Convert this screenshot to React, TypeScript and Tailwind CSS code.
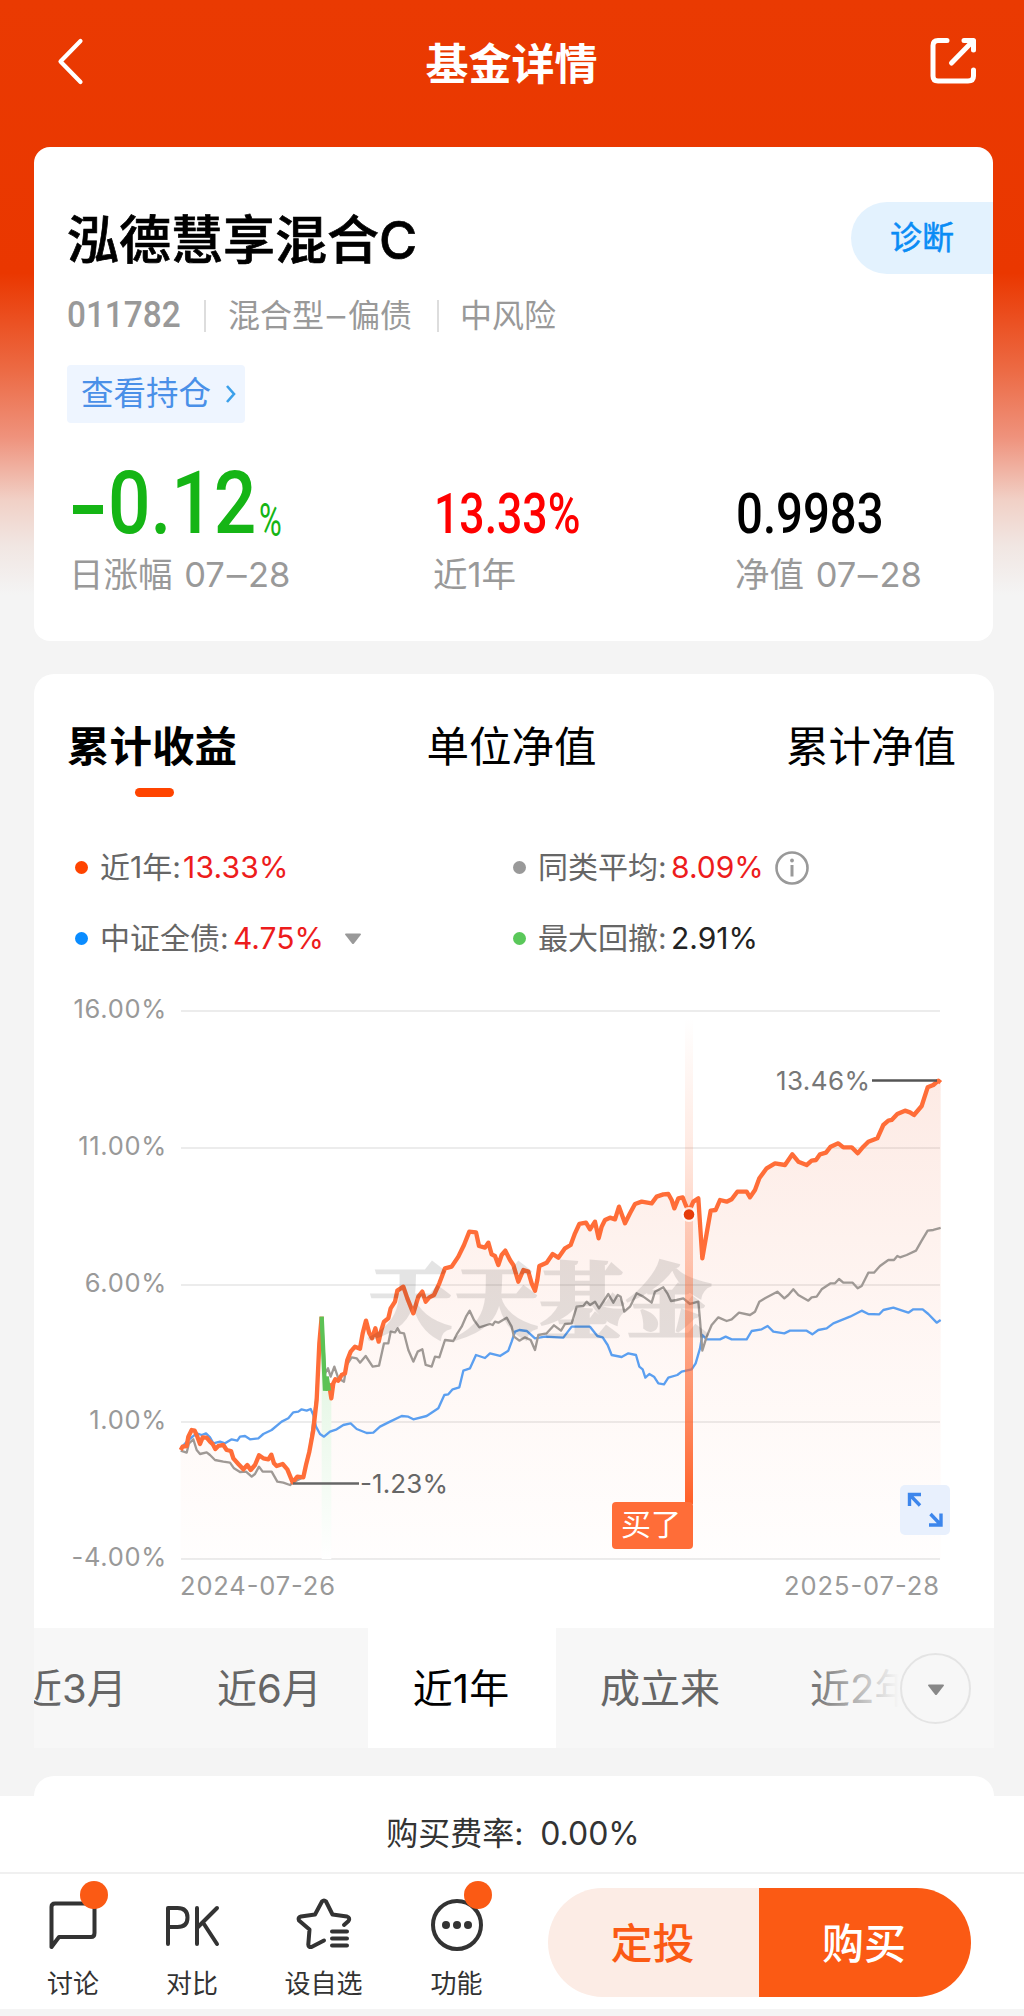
import React from "react";

const FONT = "font-['Inter','Noto_Sans_CJK_SC',sans-serif]";

const toPath = (pts: string) => "M" + pts.trim().split(/\s+/).join("L");

const FUND_A =
  "62,1350 68,1340 80,1338 85,1310 95,1290 104,1292 112,1310 120,1332 128,1312 140,1313 150,1325 158,1332 166,1347 175,1338 190,1335 200,1350 213,1353 220,1375 235,1392 250,1408 262,1395 272,1410 285,1395 297,1366 310,1375 325,1378 334,1364 342,1390 350,1398 368,1392 382,1408 398,1447 412,1430 430,1432 438,1395 448,1355 460,1290 470,1200 478,1030 485,950";
const DRAWDOWN = "485,950 490,1060 495,1172 500,1130 507,1172";
const FUND_B =
  "507,1150 514,1195 520,1150 526,1138 535,1142 545,1125 555,1120 562,1080 572,1055 585,1040 600,1046 608,1000 618,962 628,1000 636,1015 646,985 656,1025 664,990 672,965 685,955 692,925 705,905 712,872 730,860 742,895 760,940 775,890 787,875 797,905 808,892 822,885 838,850 855,805 875,800 895,770 912,735 928,695 948,697 957,738 975,743 985,728 995,763 1005,768 1015,795 1025,765 1036,752 1050,780 1060,795 1075,845 1090,810 1105,815 1115,850 1125,872 1132,840 1138,798 1160,788 1178,762 1195,773 1215,745 1232,735 1245,700 1258,672 1278,668 1290,688 1305,665 1316,715 1325,680 1335,660 1350,653 1365,658 1377,620 1395,670 1410,640 1425,612 1445,605 1475,610 1490,590 1510,583 1525,582 1535,600 1543,625 1555,595 1568,592 1577,615 1587,635 1600,605 1615,595 1627,775 1640,700 1652,632 1667,630 1680,600 1700,605 1715,598 1732,575 1760,575 1770,592 1785,570 1798,535 1820,505 1845,490 1875,495 1897,463 1915,485 1940,495 1955,482 1968,480 1980,463 1998,458 2012,440 2035,430 2050,442 2075,442 2093,460 2110,440 2125,425 2152,415 2170,375 2185,362 2195,360 2212,342 2235,332 2250,337 2262,345 2285,318 2303,262 2320,255 2335,242 2342,248";
const PEERS =
  "62,1352 80,1358 87,1330 100,1318 110,1350 120,1362 140,1357 150,1365 165,1380 190,1385 210,1388 222,1405 240,1416 258,1415 275,1430 285,1422 297,1400 308,1415 335,1415 352,1445 370,1448 390,1455 400,1447 430,1432 438,1390 450,1340 468,1200 480,1030 487,970 495,1120 504,1105 512,1130 523,1100 535,1135 552,1145 560,1095 575,1072 590,1075 600,1088 617,1068 638,1100 657,1097 672,1030 685,1030 692,995 705,997 713,985 720,998 732,1000 745,1050 760,1085 773,1055 787,1048 797,1095 815,1100 825,1070 838,1072 855,1020 880,1023 892,1000 905,980 918,950 929,932 942,960 958,982 990,972 998,975 1005,965 1015,968 1040,953 1055,980 1062,1010 1078,1022 1095,1012 1112,1020 1125,1050 1135,1005 1160,1000 1182,976 1203,992 1215,972 1235,970 1250,920 1270,918 1280,905 1290,915 1305,905 1317,925 1330,905 1345,882 1360,908 1373,885 1382,890 1393,935 1410,920 1430,880 1450,890 1475,908 1485,875 1510,862 1522,880 1533,903 1550,900 1570,895 1590,912 1615,905 1620,960 1627,1052 1640,1010 1655,975 1675,952 1700,963 1715,958 1737,938 1770,945 1785,935 1798,905 1815,895 1852,875 1873,895 1885,885 1900,868 1915,885 1945,902 1955,892 1970,890 1985,868 2012,850 2025,850 2037,837 2050,848 2078,848 2093,865 2105,858 2125,818 2142,818 2160,798 2185,780 2202,780 2212,768 2220,772 2240,765 2268,752 2285,722 2303,692 2320,690 2342,684";
const BOND =
  "62,1345 85,1320 110,1300 125,1305 138,1300 150,1312 160,1330 180,1325 195,1330 215,1318 232,1322 240,1310 255,1308 270,1318 295,1315 310,1302 335,1290 365,1265 385,1255 400,1237 415,1235 425,1228 440,1232 452,1227 460,1245 468,1280 480,1302 492,1310 510,1295 530,1288 550,1275 572,1270 590,1287 620,1299 640,1298 660,1280 690,1265 725,1248 745,1250 760,1258 800,1248 835,1225 853,1185 865,1183 878,1168 898,1162 910,1112 930,1105 948,1065 975,1074 990,1060 1020,1068 1045,1052 1055,1025 1065,995 1078,990 1100,993 1125,1015 1155,1010 1210,1013 1235,980 1290,980 1312,1008 1328,1012 1343,1035 1355,1065 1385,1071 1405,1060 1428,1065 1438,1100 1448,1108 1456,1133 1468,1122 1482,1130 1495,1150 1512,1153 1525,1133 1552,1125 1565,1115 1595,1108 1607,1090 1620,1045 1627,1005 1640,1018 1680,1018 1697,1010 1715,1018 1760,1018 1775,993 1805,988 1823,978 1840,995 1873,1000 1890,992 1940,992 1957,1003 1975,990 2000,985 2020,970 2070,950 2105,932 2125,942 2158,943 2170,930 2200,923 2245,938 2260,928 2288,928 2305,942 2330,968 2342,960";

const GRID = [
  { y: 1011, label: "16.00%" },
  { y: 1148, label: "11.00%" },
  { y: 1285, label: "6.00%" },
  { y: 1422, label: "1.00%" },
  { y: 1559, label: "-4.00%" },
];

function Chart() {
  return (
    <svg viewBox="34 980 960 648" width="960" height="648" className={`block ${FONT}`}>
      <defs>
        <linearGradient id="area" gradientUnits="userSpaceOnUse" x1="0" y1="240" x2="0" y2="1677">
          <stop offset="0" stopColor="#ee6a3f" stopOpacity="0.14" />
          <stop offset="0.6" stopColor="#fa7a4f" stopOpacity="0.055" />
          <stop offset="1" stopColor="#fa7a4f" stopOpacity="0.01" />
        </linearGradient>
        <linearGradient id="dd" gradientUnits="userSpaceOnUse" x1="0" y1="1000" x2="0" y2="1677">
          <stop offset="0" stopColor="#5ccb5c" stopOpacity="0.2" />
          <stop offset="1" stopColor="#5ccb5c" stopOpacity="0" />
        </linearGradient>
        <linearGradient id="buy" gradientUnits="userSpaceOnUse" x1="0" y1="1018" x2="0" y2="1502">
          <stop offset="0" stopColor="#ff6a35" stopOpacity="0" />
          <stop offset="0.25" stopColor="#ff6a35" stopOpacity="0.13" />
          <stop offset="0.5" stopColor="#ff6a35" stopOpacity="0.36" />
          <stop offset="0.8" stopColor="#ff6a35" stopOpacity="0.75" />
          <stop offset="1" stopColor="#ff6129" stopOpacity="1" />
        </linearGradient>
      </defs>
      {GRID.map((g) => (
        <g key={g.y}>
          <line x1="181" x2="940" y1={g.y} y2={g.y} stroke="#ececec" strokeWidth="2" />
          <text x="167" y={g.y + 7} textAnchor="end" fontSize="25.5" letterSpacing="0.7" fill="#999">
            {g.label}
          </text>
        </g>
      ))}
      <text x="180" y="1595" fontSize="25.5" textLength="155" fill="#999">2024-07-26</text>
      <text x="784" y="1595" fontSize="25.5" textLength="155" fill="#999">2025-07-28</text>
      <g transform="translate(160 1000) scale(0.33333)" fill="none" strokeLinejoin="round">
        <path d={toPath(FUND_A + " " + DRAWDOWN + " " + FUND_B + " 2342,1677 62,1677") + "Z"} fill="url(#area)" />
        <path d={toPath(DRAWDOWN + " 514,1195 514,1677 485,1677") + "Z"} fill="#fff" />
        <path d={toPath(DRAWDOWN + " 514,1195 514,1677 485,1677") + "Z"} fill="url(#dd)" />
        <path d={toPath(BOND)} stroke="#5b9ff0" strokeWidth="7" />
        <path d={toPath(PEERS)} stroke="#9f9995" strokeWidth="7" />
        <path d={toPath(FUND_A)} stroke="#ff6d38" strokeWidth="13" />
        <path d={toPath(FUND_B)} stroke="#ff6d38" strokeWidth="13" />
        <path d={toPath(DRAWDOWN)} stroke="#5cc255" strokeWidth="13" strokeLinejoin="miter" />
      </g>
      <text
        transform="translate(367 1331) scale(1 0.96)"
        fontSize="85"
        textLength="344"
        fontWeight="900"
        className="font-['Noto_Serif_CJK_SC','Noto_Sans_CJK_SC',serif]"
        fill="#000"
        stroke="#000"
        strokeWidth="2.5"
        opacity="0.1"
      >
        天天基金
      </text>
      <line x1="293" x2="359" y1="1483.5" y2="1483.5" stroke="#666" strokeWidth="2.4" />
      <text x="360" y="1493" fontSize="26" textLength="88" fill="#666">-1.23%</text>
      <line x1="872" x2="937" y1="1080.5" y2="1080.5" stroke="#555" strokeWidth="2.4" />
      <text x="776" y="1090" fontSize="26" textLength="94" fill="#777">13.46%</text>
      <rect x="685" y="1018" width="8" height="486" fill="url(#buy)" />
      <circle cx="689" cy="1214.5" r="7.5" fill="#fff" fillOpacity="0.8" />
      <circle cx="689" cy="1214.5" r="5.3" fill="#e63c0a" />
      <rect x="612" y="1502" width="81" height="47" rx="4" fill="#ff6d38" />
      <text x="621" y="1535" fontSize="30" textLength="60" fill="#fff">买了</text>
      <rect x="900" y="1485" width="50" height="50" rx="5" fill="#e8f0fd" />
      <path d="M909.500 1506V1494.500H921M910 1495L920 1505.500M929 1525H941V1513.500M940.500 1524.500L930.500 1514" fill="none" stroke="#3d86ec" strokeWidth="3.400" />
    </svg>
  );
}

function Dot({ c }: { c: string }) {
  return <span className={`mr-[12px] block size-[13px] rounded-full ${c}`} />;
}

function Legend() {
  return (
    <div className="grid h-[142px] grid-cols-[438px_1fr] grid-rows-2 pl-[41px] text-[30px] text-[#666]">
      <div className="flex items-center">
        <Dot c="bg-[#ff4400]" />
        <span className="w-[83px] whitespace-nowrap">近1年:</span>
        <span className="tracking-[0.2px] text-[#ed1c1c]">13.33%</span>
      </div>
      <div className="flex items-center">
        <Dot c="bg-[#999]" />
        <span className="w-[133px] whitespace-nowrap">同类平均:</span>
        <span className="text-[#ed1c1c]">8.09%</span>
        <svg viewBox="0 0 34 34" width="34" height="34" className="ml-[11px]" fill="none" stroke="#999" strokeWidth="2.6">
          <circle cx="17" cy="17" r="15.500" />
          <path d="M17 14V25.500" strokeWidth="3" />
          <circle cx="17" cy="9.500" r="1.900" fill="#999" stroke="none" />
        </svg>
      </div>
      <div className="flex items-center">
        <Dot c="bg-[#0a8cff]" />
        <span className="w-[133px] whitespace-nowrap">中证全债:</span>
        <span className="text-[#ed1c1c]">4.75%</span>
        <svg viewBox="0 0 18 12" width="18" height="12" className="ml-[20px]">
          <path d="M1 1.500Q1 0.500 2 0.500H16Q17 0.500 17 1.500L10 10.500Q9 11.500 8 10.500Z" fill="#999" />
        </svg>
      </div>
      <div className="flex items-center">
        <Dot c="bg-[#5ac85a]" />
        <span className="w-[133px] whitespace-nowrap">最大回撤:</span>
        <span className="text-[#222]">2.91%</span>
      </div>
    </div>
  );
}

function MonthDay() {
  return (
    <span className="ml-[2px]">
      07<span className="mx-[3px] inline-block scale-x-[1.150]">–</span>28
    </span>
  );
}

export default function App() {
  return (
    <div className={`relative h-[2016px] w-[1024px] overflow-hidden bg-[linear-gradient(to_bottom,#ea3a02_0px,#ea3700_273px,#ec6a44_370px,#ef927c_437px,#f1d0c6_500px,#f1e6e2_545px,#f4f4f4_595px)] ${FONT}`}>
      <header className="flex h-[147px] items-start justify-between pl-[54px] pr-[45px] text-white">
        <svg viewBox="0 0 34 60" width="34" height="60" className="mt-[31px]" fill="none" stroke="#fff" strokeWidth="4.200" strokeLinecap="round" strokeLinejoin="round">
          <path d="M26.500 10L6.500 30.500L26.500 51" />
        </svg>
        <h1 className="mt-[32px] ml-[6px] text-[43px] leading-[64px] font-bold">基金详情</h1>
        <svg viewBox="0 0 50 50" width="50" height="50" className="mt-[36px]" fill="none" stroke="#fff" strokeWidth="5" strokeLinecap="round" strokeLinejoin="round">
          <path d="M18 4.500H9Q4 4.500 4 9.500V40Q4 45 9 45H39Q44.500 45 44.500 40V34M35 4.500H44.500V14M43.500 5.500L22.500 27" />
        </svg>
      </header>

      <section className="mx-[34px] h-[494px] w-[959px] rounded-[16px] bg-white">
        <div className="flex h-[145px] items-start justify-between pl-[33px]">
          <h2 className="mt-[58px] flex text-[52px] leading-[72px] font-medium text-black [-webkit-text-stroke:0.700px_#000]">泓德慧享混合C</h2>
          <div className="mt-[55px] flex h-[72px] w-[142px] items-center rounded-l-full bg-[#e3f2fe] pl-[39px] text-[32px] text-[#0a8cf5] [-webkit-text-stroke:0.500px_#0a8cf5]">诊断</div>
        </div>
        <div className="flex h-[48px] items-center pl-[33px] text-[32px] text-[#999]">
          <span className="w-[113px]">
            <span className="inline-block origin-left scale-x-[0.9] font-['Roboto'] text-[37px] leading-none font-medium">011782</span>
          </span>
          <i className="mr-[22px] ml-[24px] h-[32px] w-[2px] bg-[#ddd]" />
          <span className="w-[186px] whitespace-nowrap">
            混合型<span className="mx-[4px] inline-block scale-x-[1.150]">–</span>偏债
          </span>
          <i className="mr-[21px] ml-[23px] h-[32px] w-[2px] bg-[#ddd]" />
          <span>中风险</span>
        </div>
        <div className="mt-[25px] ml-[33px] flex h-[58px] w-[178px] items-center rounded-[4px] bg-[#eef5ff] pl-[14px] text-[32.500px] text-[#4a90e8]">
          查看持仓
          <svg viewBox="0 0 12 20" width="12" height="20" className="ml-[14px]" fill="none" stroke="#3ba0ea" strokeWidth="2.600">
            <path d="M2 2L9 10L2 18" />
          </svg>
        </div>
        <div className="grid h-[124px] grid-cols-[364px_302px_1fr] pl-[36px] text-[#999]">
          <div className="flex h-[124px] items-end whitespace-nowrap text-[#15b515]">
            <span className="mb-[33px] ml-[3px] h-[9px] w-[30px] shrink-0 bg-[#15b515]" />
            <span className="ml-[5px] w-[150px] shrink-0 origin-left scale-x-[0.86] font-['Roboto'] text-[87px] leading-[87px] font-medium">0.12</span>
            <span className="ml-[1px] w-[32px] shrink-0 origin-left translate-y-[2px] scale-x-[0.66] font-['Roboto'] text-[47px] leading-[58px]">%</span>
          </div>
          <div className="flex h-[119px] items-end text-[#f00]">
            <span className="inline-block origin-left scale-x-[0.81] font-['Roboto'] text-[55px] leading-[55px] font-medium">13.33%</span>
          </div>
          <div className="flex h-[119px] items-end text-black">
            <span className="inline-block origin-left scale-x-[0.86] font-['Roboto'] text-[55px] leading-[55px] font-medium">0.9983</span>
          </div>
        </div>
        <div className="grid h-[56px] grid-cols-[364px_302px_1fr] items-center pl-[35px] text-[34.500px] whitespace-nowrap text-[#999]">
          <span>日涨幅 <MonthDay /></span>
          <span>近1年</span>
          <span>净值 <MonthDay /></span>
        </div>
      </section>

      <section className="mt-[33px] ml-[34px] h-[954px] w-[960px] rounded-t-[20px] bg-white">
        <div className="flex h-[124px] justify-between pt-[41px] pr-[38px] pl-[33px] text-[42.500px] leading-[64px] text-black">
          <div className="flex flex-col items-center font-bold">
            累计收益
            <span className="mt-[9px] ml-[4px] h-[9px] w-[39px] rounded-full bg-[#ff4400]" />
          </div>
          <div>单位净值</div>
          <div>累计净值</div>
        </div>
        <div className="mt-[34px]">
          <Legend />
        </div>
        <div className="mt-[6px]">
          <Chart />
        </div>
      </section>

      <nav className="relative ml-[34px] grid h-[120px] w-[960px] grid-cols-[147px_187px_188px_215px_1fr] overflow-hidden bg-[#f7f7f7] text-[40px] leading-[122px] whitespace-nowrap text-[#666]">
        <span className="-ml-[12px]">近3月</span>
        <span className="pl-[36px]">近6月</span>
        <span className="bg-white pr-[2px] text-center text-black">近1年</span>
        <span className="pl-[44px]">成立来</span>
        <span className="pl-[39px]">近2年</span>
        <div className="absolute top-0 right-0 h-full w-[190px] bg-[linear-gradient(to_right,rgba(247,247,247,0)_0px,#f7f7f7_95px)]" />
        <div className="absolute top-[25px] right-[23px] flex size-[71px] items-center justify-center rounded-full border-2 border-[#e4e4e4] bg-[#f7f7f7]">
          <svg viewBox="0 0 18 12" width="18" height="12" className="mt-[3px]">
            <path d="M1 1.500Q1 0.500 2 0.500H16Q17 0.500 17 1.500L10 10.500Q9 11.500 8 10.500Z" fill="#888" />
          </svg>
        </div>
      </nav>

      <div className="mt-[28px] ml-[34px] h-[20px] w-[960px] rounded-t-[20px] bg-white" />

      <footer className="h-[213px] bg-white text-[#333]">
        <div className="flex h-[78px] items-center justify-center border-b-2 border-[#f0f0f0] pb-[1px] pl-[2px] text-[32px]">
          <span className="w-[154px] whitespace-nowrap">购买费率:</span>
          <span>0.00%</span>
        </div>
        <div className="flex h-[135px] text-[26px] leading-[36px]">
          <div className="relative flex w-[146px] flex-col items-center pt-[22px]">
            <svg viewBox="0 0 54 58" width="54" height="58" fill="none" stroke="#333" strokeWidth="4" strokeLinejoin="round">
              <path d="M5.500 51V11Q5.500 7.500 9 7.500H45Q48.500 7.500 48.500 11V37Q48.500 41 45 41H13Z" />
            </svg>
            <span className="mt-[12px]">讨论</span>
            <span className="absolute top-[7px] left-[80px] size-[28px] rounded-full bg-[#fb5a14]" />
          </div>
          <div className="flex w-[92px] flex-col items-center pt-[22px]">
            <svg viewBox="0 0 58 58" width="58" height="58" fill="none" stroke="#333" strokeWidth="4" strokeLinecap="round" strokeLinejoin="round">
              <path d="M5 48V12H14.500Q24.500 12 24.500 21.500Q24.500 31 14.500 31H5M34 12V48M54 12L34.500 31.500M40 26.500L54 48" />
            </svg>
            <span className="mt-[12px]">对比</span>
          </div>
          <div className="flex w-[171px] flex-col items-center pt-[22px]">
            <svg viewBox="0 0 58 58" width="58" height="58" fill="none" stroke="#333" strokeWidth="4" strokeLinecap="round" strokeLinejoin="round">
              <path d="M29 44.500L16.500 51Q13.500 51.500 13.300 48.500L14.500 33.500L4 24.500Q2.500 21.500 6 20.500L20 18.500L27 5.500Q29 3.500 31 5.500L37.500 18.500L52 20.500Q55.500 22 53.500 25L49 29M37 35.500H52M37 42.500H52M37 49.500H52" />
            </svg>
            <span className="mt-[12px]">设自选</span>
          </div>
          <div className="relative flex w-[95px] flex-col items-center pt-[22px]">
            <svg viewBox="0 0 58 58" width="58" height="58" fill="none" stroke="#333" strokeWidth="4">
              <circle cx="29" cy="29" r="24" />
              <g fill="#333" stroke="none">
                <circle cx="18" cy="29" r="4" />
                <circle cx="29" cy="29" r="4" />
                <circle cx="40" cy="29" r="4" />
              </g>
            </svg>
            <span className="mt-[12px]">功能</span>
            <span className="absolute top-[7px] left-[55px] size-[28px] rounded-full bg-[#fb5a14]" />
          </div>
          <div className="mt-[14px] ml-[44px] flex h-[109px] w-[423px] overflow-hidden rounded-full text-[42px] leading-[112px] font-medium">
            <div className="w-[211px] bg-[#fcece5] pr-[2px] text-center text-[#fb5a14]">定投</div>
            <div className="w-[212px] bg-[#fb5a14] pr-[2px] text-center text-white">购买</div>
          </div>
        </div>
      </footer>
      <div className="h-[7px] bg-[#f4f4f4]" />
    </div>
  );
}
